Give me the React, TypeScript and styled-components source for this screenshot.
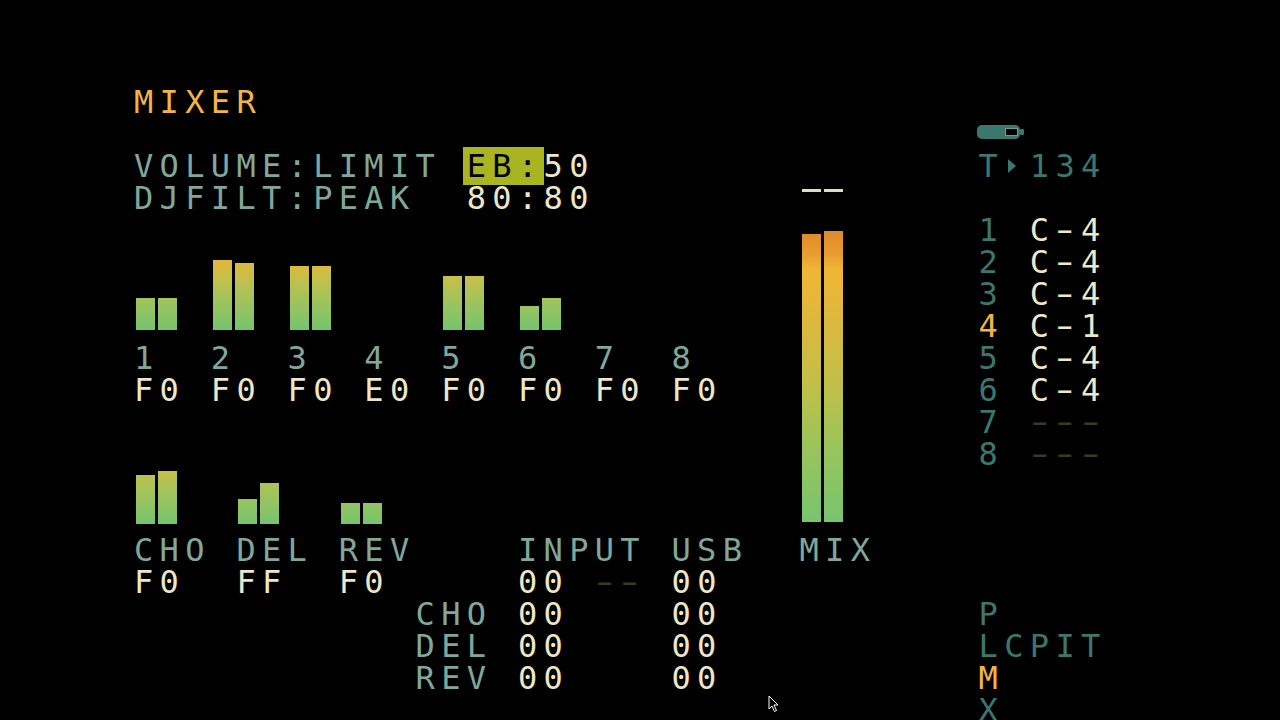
import React from 'react'
import styled, { createGlobalStyle } from 'styled-components'

const CELL_W = 25.6
const ROW_H = 32

const GlobalStyle = createGlobalStyle`
  html, body {
    margin: 0;
    padding: 0;
    background: #000;
    overflow: hidden;
  }
`

const tones = {
  title: '#f2b447',
  label: '#80a898',
  value: '#ede7c6',
  dim: '#3b3a1e',
  teal: '#3c776d',
  hot: '#f2b447',
}
type Tone = keyof typeof tones

// character grid of the tracker screen
const Screen = styled.div`
  position: relative;
  width: 1280px;
  height: 720px;
  overflow: hidden;
  box-sizing: border-box;
  padding: 86px 0 0 131px;
  background: #000;
  display: grid;
  grid-template-columns: repeat(44, ${CELL_W}px);
  grid-template-rows: repeat(20, ${ROW_H}px);
  font-family: 'DejaVu Sans Mono', monospace;
  font-size: 32px;
  line-height: ${ROW_H}px;
  letter-spacing: 6.33px;
`

const Place = styled.div<{ $col: number; $row: number; $span?: number; $rows?: number }>`
  grid-column: ${p => p.$col + 1} / span ${p => p.$span ?? 1};
  grid-row: ${p => p.$row + 1} / span ${p => p.$rows ?? 1};
`

const Line = styled(Place)`
  white-space: pre;
  padding-left: 3px;
`

const Tx = styled.span<{ $tone: Tone }>`
  color: ${p => tones[p.$tone]};
`

const Hi = styled.span`
  background: #a9b520;
  color: #000;
  margin-left: -4px;
  padding-left: 4px;
`

const Dash = styled.span`
  display: inline-block;
  transform: scaleX(1.6);
  transform-origin: 9.6px center;
`

const MeterSlot = styled(Place)<{ $pad: number }>`
  display: flex;
  justify-content: center;
  align-items: flex-end;
  gap: 3px;
  padding-bottom: ${p => p.$pad}px;
`

const chanGradient = 'linear-gradient(to top, #76c46f 0%, #a6c45a 45%, #cfbe44 75%, #e9b23a 100%)'
const mixGradient =
  'linear-gradient(to top, #78c470 0%, #96c45e 20%, #bec04a 40%, #dcb83e 60%, #f0b636 76%, #eaa030 80%, #e08a2a 87%, #d86c1e 100%)'

const Bar = styled.div<{ $scale: number; $mix?: boolean }>`
  width: 19px;
  background-image: ${p => (p.$mix ? mixGradient : chanGradient)};
  background-size: 100% ${p => p.$scale}px;
  background-position: bottom;
  background-repeat: no-repeat;
`

const MixSlot = styled(Place)`
  display: flex;
  flex-direction: column;
  align-items: center;
  padding: 7px 0 12px;
  box-sizing: border-box;
`

const PeakRow = styled.div`
  display: flex;
  gap: 3px;
`

const Peak = styled.div`
  width: 19px;
  height: 3px;
  background: #e3ddbb;
`

const MixBars = styled.div`
  flex: 1;
  display: flex;
  align-items: flex-end;
  gap: 3px;
`

const BatterySlot = styled(Place)`
  display: flex;
  align-items: flex-start;
  padding: 7px 0 0 1px;

  svg {
    display: block;
  }
`

const GlyphSlot = styled(Place)`
  display: flex;
  align-items: center;
  padding-left: 7px;
`

const Cursor = styled.svg`
  position: absolute;
  left: 768px;
  top: 695px;
`

const channels: [number, number][] = [
  [32, 32],
  [70, 67],
  [64, 64],
  [0, 0],
  [54, 54],
  [24, 32],
  [0, 0],
  [0, 0],
]

const fx: { col: number; h: [number, number] }[] = [
  { col: 0, h: [49, 53] },
  { col: 4, h: [25, 41] },
  { col: 8, h: [21, 21] },
]

const notes: (string | null)[] = ['C-4', 'C-4', 'C-4', 'C-1', 'C-4', 'C-4', null, null]

function Note({ value }: { value: string | null }) {
  if (!value) {
    return (
      <Tx $tone="dim">
        <Dash>-</Dash>
        <Dash>-</Dash>
        <Dash>-</Dash>
      </Tx>
    )
  }
  return (
    <Tx $tone="value">
      {value[0]}
      <Dash>-</Dash>
      {value[2]}
    </Tx>
  )
}

function Battery() {
  return (
    <svg width="47" height="14" viewBox="0 0 47 14">
      <rect x="0" y="0" width="43" height="14" rx="5" fill="#3c776d" />
      <rect x="43" y="4" width="4" height="6" rx="1" fill="#3c776d" />
      <rect x="28.5" y="3.5" width="12" height="7" fill="#000" stroke="#6f9c92" strokeWidth="1" />
    </svg>
  )
}

export default function App() {
  return (
    <>
      <GlobalStyle />
      <Screen>
        <Line $col={0} $row={0}>
          <Tx $tone="title">MIXER</Tx>
        </Line>

        <Line $col={0} $row={2}>
          <Tx $tone="label">VOLUME:LIMIT </Tx>
          <Hi>EB:</Hi>
          <Tx $tone="value">50</Tx>
        </Line>
        <Line $col={0} $row={3}>
          <Tx $tone="label">DJFILT:PEAK  </Tx>
          <Tx $tone="value">80:80</Tx>
        </Line>

        {channels.map((h, i) =>
          h[0] > 0 ? (
            <MeterSlot key={i} $col={i * 3} $row={5} $span={2} $rows={3} $pad={12}>
              <Bar $scale={76} style={{ height: h[0] }} />
              <Bar $scale={76} style={{ height: h[1] }} />
            </MeterSlot>
          ) : null
        )}

        <Line $col={0} $row={8}>
          <Tx $tone="label">1  2  3  4  5  6  7  8</Tx>
        </Line>
        <Line $col={0} $row={9}>
          <Tx $tone="value">F0 F0 F0 E0 F0 F0 F0 F0</Tx>
        </Line>

        {fx.map(f => (
          <MeterSlot key={f.col} $col={f.col} $row={11} $span={2} $rows={3} $pad={10}>
            <Bar $scale={76} style={{ height: f.h[0] }} />
            <Bar $scale={76} style={{ height: f.h[1] }} />
          </MeterSlot>
        ))}

        <MixSlot $col={26} $row={3} $span={2} $rows={11}>
          <PeakRow>
            <Peak />
            <Peak />
          </PeakRow>
          <MixBars>
            <Bar $mix $scale={332} style={{ height: 288 }} />
            <Bar $mix $scale={332} style={{ height: 291 }} />
          </MixBars>
        </MixSlot>

        <Line $col={0} $row={14}>
          <Tx $tone="label">CHO DEL REV    INPUT USB  MIX</Tx>
        </Line>
        <Line $col={0} $row={15}>
          <Tx $tone="value">F0  FF  F0     00 </Tx>
          <Tx $tone="dim">
            <Dash>-</Dash>
            <Dash>-</Dash>
          </Tx>
          <Tx $tone="value"> 00</Tx>
        </Line>
        {['CHO', 'DEL', 'REV'].map((name, i) => (
          <Line key={name} $col={11} $row={16 + i}>
            <Tx $tone="label">{name} </Tx>
            <Tx $tone="value">00    00</Tx>
          </Line>
        ))}

        <BatterySlot $col={33} $row={1} $span={2}>
          <Battery />
        </BatterySlot>
        <Line $col={33} $row={2}>
          <Tx $tone="teal">T</Tx>
        </Line>
        <GlyphSlot $col={34} $row={2}>
          <svg width="8" height="14" viewBox="0 0 8 14">
            <path d="M0 0 L8 7 L0 14 Z" fill="#3c776d" />
          </svg>
        </GlyphSlot>
        <Line $col={35} $row={2}>
          <Tx $tone="teal">134</Tx>
        </Line>

        {notes.map((n, i) => (
          <Line key={i} $col={33} $row={4 + i}>
            <Tx $tone={i === 3 ? 'hot' : 'teal'}>{i + 1} </Tx>
            <Note value={n} />
          </Line>
        ))}

        <Line $col={33} $row={16}>
          <Tx $tone="teal">P</Tx>
        </Line>
        <Line $col={33} $row={17}>
          <Tx $tone="teal">LCPIT</Tx>
        </Line>
        <Line $col={33} $row={18}>
          <Tx $tone="hot">M</Tx>
        </Line>
        <Line $col={33} $row={19}>
          <Tx $tone="teal">X</Tx>
        </Line>

        <Cursor width="12" height="18" viewBox="0 0 12 18">
          <path d="M1 1 L1 14 L4 11 L6.5 16.5 L8.5 15.5 L6 10 L10 10 Z" fill="#000" stroke="#fff" strokeWidth="1" />
        </Cursor>
      </Screen>
    </>
  )
}
